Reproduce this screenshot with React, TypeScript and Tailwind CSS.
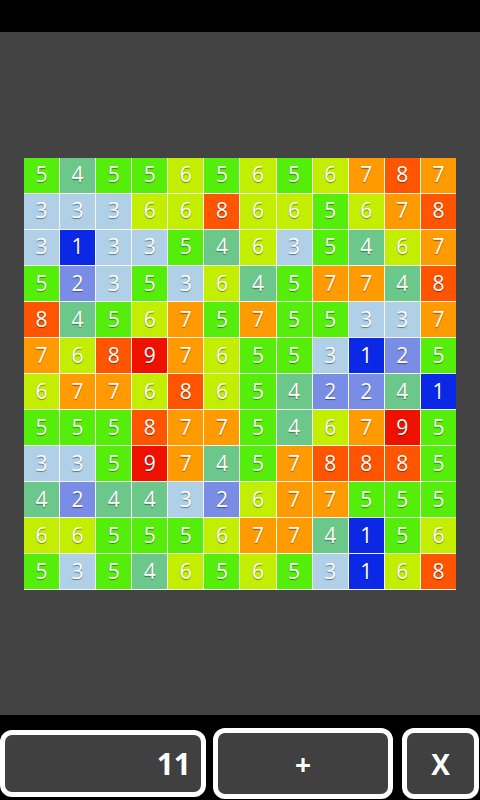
const board: number[][] = [
  [5, 4, 5, 5, 6, 5, 6, 5, 6, 7, 8, 7],
  [3, 3, 3, 6, 6, 8, 6, 6, 5, 6, 7, 8],
  [3, 1, 3, 3, 5, 4, 6, 3, 5, 4, 6, 7],
  [5, 2, 3, 5, 3, 6, 4, 5, 7, 7, 4, 8],
  [8, 4, 5, 6, 7, 5, 7, 5, 5, 3, 3, 7],
  [7, 6, 8, 9, 7, 6, 5, 5, 3, 1, 2, 5],
  [6, 7, 7, 6, 8, 6, 5, 4, 2, 2, 4, 1],
  [5, 5, 5, 8, 7, 7, 5, 4, 6, 7, 9, 5],
  [3, 3, 5, 9, 7, 4, 5, 7, 8, 8, 8, 5],
  [4, 2, 4, 4, 3, 2, 6, 7, 7, 5, 5, 5],
  [6, 6, 5, 5, 5, 6, 7, 7, 4, 1, 5, 6],
  [5, 3, 5, 4, 6, 5, 6, 5, 3, 1, 6, 8],
];

const cellColor: Record<number, string> = {
  1: "bg-[#0a28e6]",
  2: "bg-[#7a8de6]",
  3: "bg-[#afd0e6]",
  4: "bg-[#6cc88a]",
  5: "bg-[#55ee0a]",
  6: "bg-[#c4ee00]",
  7: "bg-[#ff9a00]",
  8: "bg-[#ff5500]",
  9: "bg-[#ee1100]",
};

function Cell({ value }: { value: number }) {
  return (
    <div
      className={`${cellColor[value]} flex items-center justify-center text-[21px] text-white [text-shadow:0_1px_1px_rgba(0,0,0,0.45)]`}
    >
      {value}
    </div>
  );
}

export default function App() {
  return (
    <div className="w-[480px] h-[800px] flex flex-col bg-black font-['Open_Sans','Noto_Sans',sans-serif]">
      <div className="h-[32px] bg-black" />

      <div className="flex-1 bg-[#434343] flex items-center justify-center">
        <div className="w-[432px] h-[432px] grid grid-cols-12 grid-rows-12 gap-px bg-[#f4f8ea]">
          {board.flat().map((v, i) => (
            <Cell key={i} value={v} />
          ))}
        </div>
      </div>

      <div className="h-[85px] bg-black flex items-start">
        <div className="mt-[15px] w-[206px] h-[67px] rounded-[12px] border-[5px] border-white bg-[#404040] flex items-center justify-end pr-[10px] text-white text-[30px] font-bold">
          11
        </div>
        <div className="mt-[13px] ml-[7px] w-[180px] h-[71px] rounded-[12px] border-[5px] border-white bg-[#404040] flex items-center justify-center text-white text-[28px] font-bold">
          +
        </div>
        <div className="mt-[13px] ml-[9px] w-[77px] h-[71px] rounded-[12px] border-[5px] border-white bg-[#404040] flex items-center justify-center text-white text-[28px] font-bold">
          X
        </div>
      </div>
    </div>
  );
}
